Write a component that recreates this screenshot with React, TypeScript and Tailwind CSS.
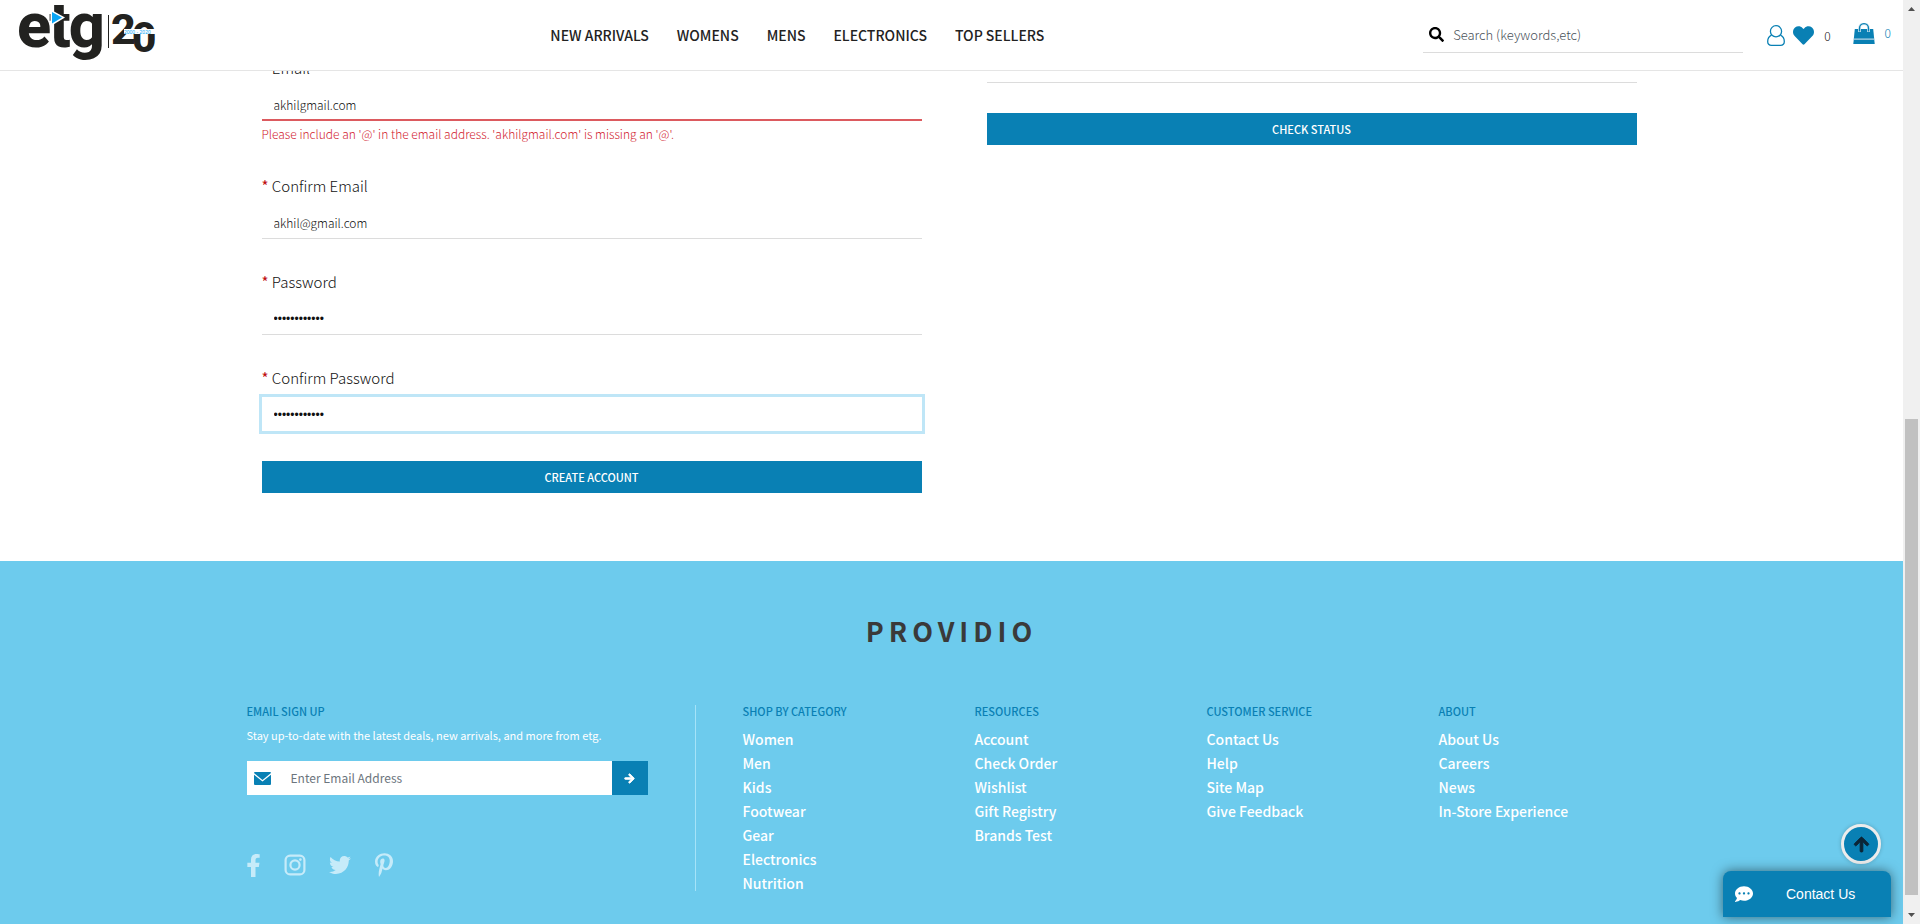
import React from "react";
import {
  FaArrowRight,
  FaArrowUp,
  FaCommentDots,
  FaFacebookF,
  FaHeart,
  FaPinterestP,
  FaSearch,
  FaTwitter,
} from "react-icons/fa";

const NAV = ["New Arrivals", "Womens", "Mens", "Electronics", "Top Sellers"];

const COLUMNS = [
  {
    title: "Shop by Category",
    links: ["Women", "Men", "Kids", "Footwear", "Gear", "Electronics", "Nutrition"],
  },
  {
    title: "Resources",
    links: ["Account", "Check Order", "Wishlist", "Gift Registry", "Brands Test"],
  },
  {
    title: "Customer Service",
    links: ["Contact Us", "Help", "Site Map", "Give Feedback"],
  },
  {
    title: "About",
    links: ["About Us", "Careers", "News", "In-Store Experience"],
  },
];

function Logo() {
  return (
    <svg
      className="block overflow-visible"
      width="140"
      height="70"
      viewBox="16 0 140 70"
      role="img"
      aria-label="etg 20"
    >
      <text x="17" y="47" fill="#222220" fontFamily="Roboto, sans-serif" fontWeight="800" fontSize="63">
        e<tspan dx="-2">t</tspan><tspan dx="-2">g</tspan>
      </text>
      <path d="M52 12 62 17.500 52 23.500Z" fill="#0aa5f5" stroke="#fff" strokeWidth="3" paintOrder="stroke" />
      <rect x="108" y="15" width="1" height="33" fill="#222220" />
      <text x="111" y="44" fill="#222220" fontFamily="Roboto, sans-serif" fontWeight="800" fontSize="43">
        2<tspan dx="-4" dy="8">0</tspan>
      </text>
      <rect x="124" y="29" width="32" height="5" fill="#fff" />
      <text x="124" y="34" fontFamily="Liberation Sans, sans-serif" fontSize="5" fill="#0aa5f5">
        2000 - 2020
      </text>
    </svg>
  );
}

function UserIcon() {
  return (
    <svg width="18" height="21" viewBox="0 0 18 21" fill="none" stroke="#0980b4" strokeWidth="1.300">
      <circle cx="9" cy="6.300" r="5.600" />
      <path d="M4.500 10.200C1.800 11.500.7 14 .7 16.500c0 2.700 1.500 3.800 3.800 3.800h9c2.300 0 3.800-1.100 3.800-3.800 0-2.500-1.100-5-3.800-6.300" />
    </svg>
  );
}

function BagIcon() {
  return (
    <svg width="22" height="21" viewBox="0 0 22 21">
      <path d="M1.800 6h18.400L21.700 21H.3z" fill="#0980b4" />
      <path d="M.9 15.500h20.200v1.200H.8z" fill="#b5d5e6" />
      <path d="M6.500 9V5.200a4.500 4.500 0 0 1 9 0V9" fill="none" stroke="#cfe4ef" strokeWidth="2.800" />
      <path d="M6.500 8.500V5.200a4.500 4.500 0 0 1 9 0v3.300" fill="none" stroke="#0980b4" strokeWidth="1.300" />
    </svg>
  );
}

function EnvelopeIcon() {
  return (
    <svg width="17" height="13" viewBox="0 0 17 13" fill="#0980b4">
      <path d="M1 0h15a1 1 0 0 1 1 1L8.500 8 0 1a1 1 0 0 1 1-1z" />
      <path d="M0 2.700 8.500 9.500 17 2.700V12a1 1 0 0 1-1 1H1a1 1 0 0 1-1-1z" />
    </svg>
  );
}

function InstagramIcon() {
  return (
    <svg width="22" height="22" viewBox="0 0 22 22" fill="none" stroke="currentColor" strokeWidth="2.200">
      <rect x="1.600" y="1.600" width="18.800" height="18.800" rx="4.500" />
      <circle cx="11" cy="11" r="4.600" />
      <circle cx="16.400" cy="5.600" r="1.300" fill="currentColor" stroke="none" />
    </svg>
  );
}

type FieldProps = {
  id: string;
  label: string;
  type: string;
  value: string;
  error?: string;
  focused?: boolean;
};

function Field({ id, label, type, value, error, focused }: FieldProps) {
  const state = error
    ? "border-b-2 border-[#dc5a5f]"
    : focused
      ? "ring-3 ring-[#bfe6f7]"
      : "border-b border-[#dcdcdc]";
  const font = type === "password" ? "font-['Liberation_Sans',sans-serif]" : "font-light";
  return (
    <div className="flex flex-col">
      <label htmlFor={id} className="mb-[7px] text-[15px] leading-6 font-light">
        <span className="font-normal text-[#c00d0d]">*</span> {label}
      </label>
      <input
        id={id}
        type={type}
        defaultValue={value}
        aria-invalid={error ? true : undefined}
        className={`h-[34px] w-full bg-white px-3 pt-[2px] text-[12px] outline-none ${state} ${font}`}
      />
      {error && <p className="h-[22px] pt-[3px] text-[12px] leading-5 font-light text-[#d2232f]">{error}</p>}
    </div>
  );
}

function Header() {
  return (
    <header className="flex h-[71px] shrink-0 items-center border-b border-[#e5e5e5] bg-white pl-4">
      <div className="flex w-[28%]">
        <a href="#home" aria-label="Home">
          <Logo />
        </a>
      </div>
      <nav className="flex gap-7 pl-[6px] text-[14px] font-medium whitespace-nowrap uppercase">
        {NAV.map((item) => (
          <a key={item} href="#nav">
            {item}
          </a>
        ))}
      </nav>
      <div className="flex flex-1 items-center justify-end pr-3">
        <label className="mr-6 flex h-9 w-[320px] items-center border-b border-[#dcdcdc] pl-[6px]">
          <FaSearch className="size-[15px] text-black" aria-hidden />
          <input
            type="search"
            aria-label="Search"
            placeholder="Search (keywords,etc)"
            className="ml-[9px] flex-1 text-[13px] font-light outline-none placeholder:text-[#49525a]"
          />
        </label>
        <a href="#account" aria-label="Account">
          <UserIcon />
        </a>
        <a href="#wishlist" className="ml-2 flex items-center gap-[10px] text-[12px] font-light">
          <FaHeart className="size-[21px] text-[#0980b4]" aria-hidden />
          <span className="pt-[2px]">0</span>
        </a>
        <a
          href="#bag"
          aria-label="Bag"
          className="mb-1 ml-[22px] flex items-center gap-[10px] text-[12px] font-light text-[#0980b4]"
        >
          <BagIcon />
          <span>0</span>
        </a>
      </div>
    </header>
  );
}

function Footer() {
  return (
    <footer className="flex-1 bg-[#6dcbed] pt-[50px] text-[#3a3a3a]">
      <h2 className="text-center text-[27px] leading-[40px] font-bold tracking-[5px]">PROVIDIO</h2>
      <div className="mx-auto mt-[54px] flex w-full max-w-[1410px] text-[14px] font-medium text-white">
        <section className="w-[449px] border-r border-[#a5e3f8]">
          <h3 className="text-[11px] leading-3 text-[#0980b4] uppercase">Email Sign Up</h3>
          <p className="mt-[10px] text-[11px] leading-4 font-normal">
            Stay up-to-date with the latest deals, new arrivals, and more from etg.
          </p>
          <form className="mt-[18px] flex h-[34px] w-[401px] bg-white" onSubmit={(e) => e.preventDefault()}>
            <label htmlFor="signup" className="flex items-center pl-[7px]">
              <EnvelopeIcon />
            </label>
            <input
              id="signup"
              type="email"
              aria-label="Email address"
              placeholder="Enter Email Address"
              className="min-w-0 flex-1 pl-5 text-[12px] font-normal text-[#3a3a3a] outline-none placeholder:text-[#6c757d]"
            />
            <button type="submit" aria-label="Subscribe" className="flex w-9 items-center justify-center bg-[#0980b4]">
              <FaArrowRight className="size-[11px]" stroke="currentColor" strokeWidth="40" />
            </button>
          </form>
          <div className="mt-[58px] flex items-center text-[#c6ebf9]">
            <a href="#facebook" aria-label="Facebook" className="w-[37px]">
              <FaFacebookF className="-ml-[5px] size-[23px]" />
            </a>
            <a href="#instagram" aria-label="Instagram" className="w-[45px]">
              <InstagramIcon />
            </a>
            <a href="#twitter" aria-label="Twitter" className="w-[43px]">
              <FaTwitter className="size-[22px]" />
            </a>
            <a href="#pinterest" aria-label="Pinterest">
              <FaPinterestP className="size-6" />
            </a>
          </div>
        </section>
        <div className="grid flex-1 grid-cols-[232px_232px_232px_1fr] pl-[47px]">
          {COLUMNS.map((column) => (
            <section key={column.title}>
              <h3 className="mb-[10px] text-[11px] leading-3 text-[#0980b4] uppercase">{column.title}</h3>
              <ul className="-mb-1">
                {column.links.map((link) => (
                  <li key={link} className="h-6 leading-6">
                    <a href="#link">{link}</a>
                  </li>
                ))}
              </ul>
            </section>
          ))}
        </div>
      </div>
    </footer>
  );
}

export default function App() {
  return (
    <div className="relative flex h-screen overflow-hidden bg-white font-['Noto_Sans_CJK_SC',sans-serif] text-[#222222]">
      <div className="flex min-w-0 flex-1 flex-col">
        <Header />
        <main className="shrink-0 overflow-hidden text-[#111111]">
          <div className="mx-auto flex w-full max-w-[1410px] gap-[65px] pr-5 pb-[68px] pl-[15px]">
            <form className="-mt-[15px] flex flex-[660] flex-col gap-[31px]" onSubmit={(e) => e.preventDefault()}>
              <Field
                id="email"
                label="Email"
                type="text"
                value="akhilgmail.com"
                error="Please include an '@' in the email address. 'akhilgmail.com' is missing an '@'."
              />
              <Field id="confirm-email" label="Confirm Email" type="text" value="akhil@gmail.com" />
              <Field id="password" label="Password" type="password" value="abcdefghijkl" />
              <Field id="confirm-password" label="Confirm Password" type="password" value="abcdefghijkl" focused />
              <button type="submit" className="-mt-px h-8 bg-[#0980b4] text-[11px] font-medium text-white">
                CREATE ACCOUNT
              </button>
            </form>
            <form className="flex flex-[650] flex-col gap-[30px]" onSubmit={(e) => e.preventDefault()}>
              <input type="text" aria-label="Billing ZIP code" className="h-3 border-b border-[#dcdcdc] outline-none" />
              <button type="submit" className="h-8 bg-[#0980b4] text-[11px] font-medium text-white">
                CHECK STATUS
              </button>
            </form>
          </div>
        </main>
        <Footer />
      </div>

      <div className="flex w-[17px] flex-col items-center bg-[#f0f0f0]" aria-hidden>
        <svg width="17" height="17" viewBox="0 0 17 17" fill="#505050">
          <path d="M5 11h7L8.500 7z" />
        </svg>
        <div className="flex-[402]" />
        <div className="w-[13px] flex-[476] bg-[#c1c1c1]" />
        <div className="flex-[12]" />
        <svg width="17" height="17" viewBox="0 0 17 17" fill="#505050">
          <path d="M5 6h7L8.500 10z" />
        </svg>
      </div>

      <button
        type="button"
        aria-label="Back to top"
        className="absolute right-[39px] bottom-[60px] flex size-10 items-center justify-center rounded-full border-3 border-[#ececec] bg-[#0980b4] text-[#0b2536] shadow-[0_0_4px_rgba(0,0,0,0.2)]"
      >
        <FaArrowUp className="size-[17px]" stroke="currentColor" strokeWidth="30" />
      </button>
      <button
        type="button"
        className="absolute right-[29px] bottom-[7px] flex h-[46px] w-[168px] items-center rounded-t-lg bg-[#0980b4] pl-3 font-['Liberation_Sans',sans-serif] text-[14px] text-white shadow-[0_0_12px_rgba(0,0,0,0.5)]"
      >
        <FaCommentDots className="size-[18px]" aria-hidden />
        <span className="ml-[33px]">Contact Us</span>
      </button>
    </div>
  );
}
